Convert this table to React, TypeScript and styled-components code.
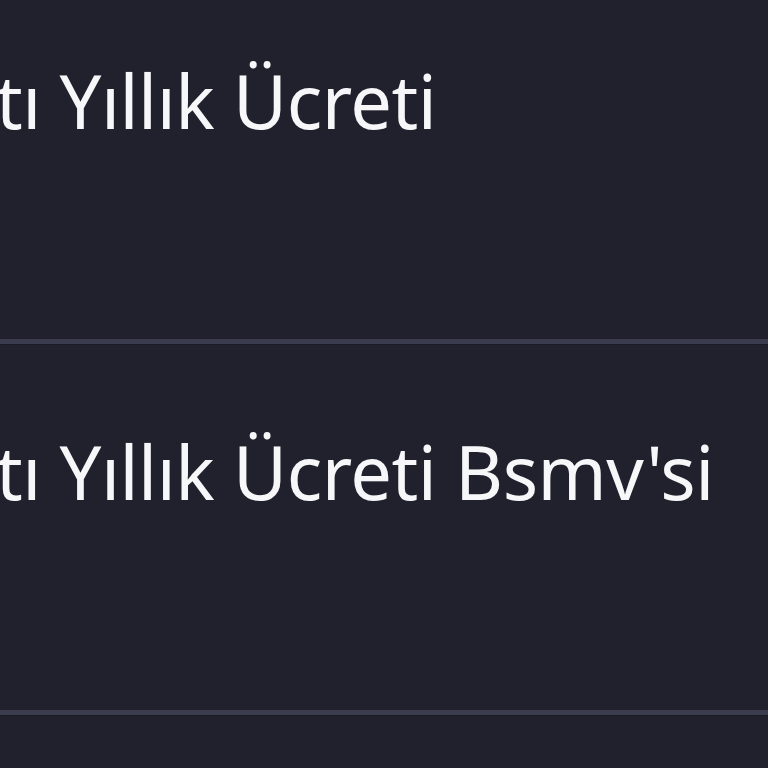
import React from "react";
import styled, { createGlobalStyle } from "styled-components";

const Global = createGlobalStyle`
  html, body { margin: 0; padding: 0; background: #20212d; }
  body { overflow: hidden; }
`;

const List = styled.div`
  width: 768px;
  height: 768px;
  overflow: hidden;
  background: #20212d;
`;

const Rows = styled.div`
  display: flex;
  flex-direction: column;
  margin-top: -27px;
`;

const Row = styled.div`
  box-sizing: border-box;
  height: 371px;
  padding-top: 88px;
  border-bottom: 5px solid #3b3d4e;
  box-shadow: 0 1px 0 #1a1b25;
  display: flex;
  align-items: flex-start;
  overflow: hidden;
`;

const Label = styled.span`
  font-family: "Noto Sans", sans-serif;
  font-size: 74px;
  font-weight: 400;
  line-height: 80px;
  letter-spacing: -0.5px;
  font-variant-ligatures: none;
  color: #f7f7f9;
  white-space: nowrap;
  margin-left: -4px;
`;

const items = ["tı Yıllık Ücreti", "tı Yıllık Ücreti Bsmv'si", ""];

export default function App() {
  return (
    <>
      <Global />
      <List>
        <Rows>
          {items.map((t, i) => (
            <Row key={i}>
              <Label>{t}</Label>
            </Row>
          ))}
        </Rows>
      </List>
    </>
  );
}
